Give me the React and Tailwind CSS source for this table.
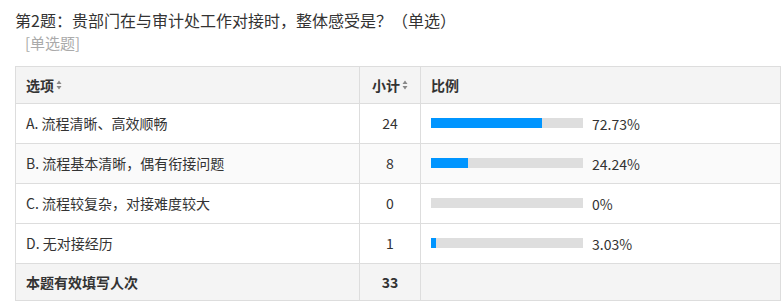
import React from "react";

const rows = [
  { label: "A. 流程清晰、高效顺畅", count: 24, pct: 72.73, text: "72.73%" },
  { label: "B. 流程基本清晰，偶有衔接问题", count: 8, pct: 24.24, text: "24.24%", alt: true },
  { label: "C. 流程较复杂，对接难度较大", count: 0, pct: 0, text: "0%" },
  { label: "D. 无对接经历", count: 1, pct: 3.03, text: "3.03%" },
];

function Sort() {
  return (
    <svg width="6" height="10" viewBox="0 0 6 10" className="ml-[2px] inline-block">
      <path d="M3 0.5 L5.5 4 L0.5 4 Z" fill="#888" />
      <path d="M3 9.5 L5.5 6 L0.5 6 Z" fill="#888" />
    </svg>
  );
}

export default function App() {
  return (
    <div className="bg-white w-[783px] h-[305px] overflow-hidden text-[#333]" style={{ fontFamily: '"Noto Sans CJK SC", "Noto Sans", sans-serif' }}>
      <div className="pl-[15px] pt-[8px] text-[16px] leading-[24px] text-[#333]">第2题：贵部门在与审计处工作对接时，整体感受是？（单选）</div>
      <div className="pl-[25px] text-[15px] leading-[22px] text-[#aaa]">[单选题]</div>
      <div className="ml-[15px] mt-[12px] w-[766px] border border-[#ddd] text-[14px]">
        <div className="flex h-[37px] bg-[#f4f4f4] border-b border-[#ddd] font-bold">
          <div className="w-[344px] flex items-center pl-[10px] border-r border-[#ddd]">选项<Sort /></div>
          <div className="w-[61px] flex items-center justify-center border-r border-[#ddd]">小计<Sort /></div>
          <div className="flex-1 flex items-center pl-[10px]">比例</div>
        </div>
        {rows.map((r) => (
          <div key={r.label} className={"flex h-[40px] border-b border-[#ddd] " + (r.alt ? "bg-[#fafafa]" : "bg-white")}>
            <div className="w-[344px] flex items-center pl-[10px] border-r border-[#ddd]">{r.label}</div>
            <div className="w-[61px] flex items-center justify-center border-r border-[#ddd]">{r.count}</div>
            <div className="flex-1 flex items-center pl-[10px]">
              <div className="w-[152px] h-[10px] bg-[#dedede] mt-[-2px]">
                <div className="h-full bg-[#0095ff]" style={{ width: `${r.pct}%` }} />
              </div>
              <span className="ml-[9px] text-[14px] mt-[2px]">{r.text}</span>
            </div>
          </div>
        ))}
        <div className="flex h-[36px] bg-[#f4f4f4] font-bold">
          <div className="w-[344px] flex items-center pl-[10px] border-r border-[#ddd]">本题有效填写人次</div>
          <div className="w-[61px] flex items-center justify-center border-r border-[#ddd]">33</div>
          <div className="flex-1"></div>
        </div>
      </div>
    </div>
  );
}
